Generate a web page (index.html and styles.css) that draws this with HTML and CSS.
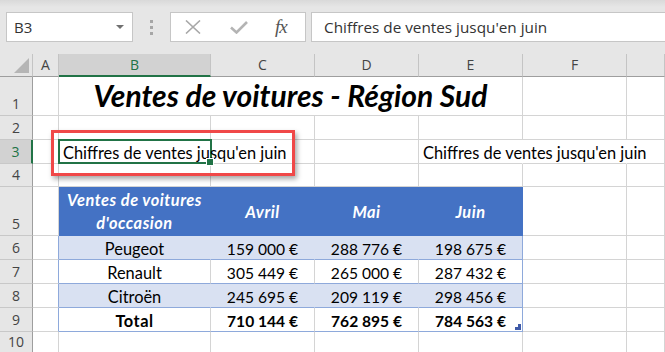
FILE: index.html
```html
<!DOCTYPE html>
<html lang="fr">
<head>
    <meta charset="UTF-8">
    <title>Ventes de voitures</title>
    <link rel="stylesheet" href="styles.css">
</head>
<body>
    <div class="toolbar">
        <div class="namebox">
            <span>B3</span>
            <span class="caret"></span>
        </div>
        <div class="grip"><i></i><i></i><i></i></div>
        <div class="fx-buttons">
            <svg width="16" height="14" viewBox="0 0 16 14"><path d="M1 0.5 L15 13.5 M15 0.5 L1 13.5" stroke="#a8a8a8" stroke-width="1.6" fill="none"/></svg>
            <svg width="18" height="13" viewBox="0 0 18 13"><path d="M1 6.5 L6.5 11.5 L17 1" stroke="#b4b4b4" stroke-width="2.6" fill="none"/></svg>
            <span class="fx">fx</span>
        </div>
        <div class="formula">Chiffres de ventes jusqu'en juin</div>
    </div>

    <div class="sheet">
        <table class="grid">
            <colgroup>
                <col class="c-head"><col class="c-a"><col class="c-b"><col class="c-n"><col class="c-n"><col class="c-n"><col class="c-n"><col class="c-g">
            </colgroup>
            <tr class="r-cols">
                <th class="corner"><span class="tri"></span></th>
                <th>A</th>
                <th class="sel">B</th>
                <th>C</th>
                <th>D</th>
                <th>E</th>
                <th>F</th>
                <th></th>
            </tr>
            <tr class="r-title">
                <th class="rh">1</th>
                <td></td>
                <td colspan="4" class="title">Ventes de voitures - Région Sud</td>
                <td></td>
                <td></td>
            </tr>
            <tr>
                <th class="rh">2</th>
                <td></td><td></td><td></td><td></td><td></td><td></td><td></td>
            </tr>
            <tr>
                <th class="rh sel">3</th>
                <td></td>
                <td class="active no-r"><span class="over">Chiffres de ventes jusqu'en juin</span></td>
                <td></td>
                <td></td>
                <td class="no-r"><span class="over">Chiffres de ventes jusqu'en juin</span></td>
                <td class="no-r"></td>
                <td></td>
            </tr>
            <tr class="r-4">
                <th class="rh">4</th>
                <td></td><td></td><td></td><td></td><td></td><td></td><td></td>
            </tr>
            <tr class="r-head">
                <th class="rh">5</th>
                <td></td>
                <td class="th-blue">Ventes de voitures<br>d'occasion</td>
                <td class="th-blue">Avril</td>
                <td class="th-blue">Mai</td>
                <td class="th-blue last">Juin</td>
                <td></td><td></td>
            </tr>
            <tr class="band">
                <th class="rh">6</th>
                <td class="edge"></td>
                <td class="t">Peugeot</td>
                <td class="t num">159 000 €</td>
                <td class="t num">288 776 €</td>
                <td class="t num last">198 675 €</td>
                <td></td><td></td>
            </tr>
            <tr>
                <th class="rh">7</th>
                <td class="edge"></td>
                <td class="t">Renault</td>
                <td class="t num">305 449 €</td>
                <td class="t num">265 000 €</td>
                <td class="t num last">287 432 €</td>
                <td></td><td></td>
            </tr>
            <tr class="band">
                <th class="rh">8</th>
                <td class="edge"></td>
                <td class="t">Citroën</td>
                <td class="t num">245 695 €</td>
                <td class="t num">209 119 €</td>
                <td class="t num last">298 456 €</td>
                <td></td><td></td>
            </tr>
            <tr class="total">
                <th class="rh">9</th>
                <td class="edge"></td>
                <td class="t label">Total</td>
                <td class="t num">710 144 €</td>
                <td class="t num">762 895 €</td>
                <td class="t num last"><span class="resize"></span>784 563 €</td>
                <td></td><td></td>
            </tr>
            <tr class="r-10">
                <th class="rh">10</th>
                <td></td><td></td><td></td><td></td><td></td><td></td><td></td>
            </tr>
        </table>
        <div class="callout"></div>
    </div>
</body>
</html>
```

FILE: styles.css
```css
:root {
    --ui-bg: #e6e6e6;
    --grid-line: #d4d4d4;
    --excel-green: #217346;
    --table-blue: #4472c4;
    --band: #d9e1f2;
    --band-line: #8ea9db;
}

* {
    margin: 0;
    padding: 0;
    box-sizing: border-box;
}

body {
    width: 665px;
    height: 352px;
    overflow: hidden;
    background: #fff;
    font-family: 'Open Sans', 'Noto Sans', sans-serif;
    color: #333;
}

/* Formula bar */
.toolbar {
    height: 54px;
    padding-top: 12px;
    display: flex;
    align-items: flex-start;
    background: linear-gradient(#d9d9d9, var(--ui-bg) 7px);
}

.namebox {
    margin-left: 6px;
    width: 127px;
    height: 30px;
    background: #fff;
    border: 1px solid #c6c6c6;
    display: flex;
    align-items: center;
    justify-content: space-between;
    padding: 0 8px 0 7px;
    font-size: 15px;
}

.caret {
    width: 0;
    height: 0;
    border-left: 4px solid transparent;
    border-right: 4px solid transparent;
    border-top: 4px solid #707070;
}

.grip {
    width: 37px;
    height: 30px;
    display: flex;
    flex-direction: column;
    align-items: center;
    justify-content: center;
    gap: 3px;
}

.grip i {
    width: 3px;
    height: 3px;
    background: #a6a6a6;
}

.fx-buttons {
    width: 136px;
    height: 30px;
    background: #fff;
    border: 1px solid #c6c6c6;
    display: flex;
    align-items: center;
    padding-left: 14px;
    gap: 29px;
}

.fx {
    font-family: 'Liberation Serif', serif;
    font-style: italic;
    font-size: 19px;
    color: #555;
    margin-left: -2px;
    letter-spacing: -1px;
}

.formula {
    margin-left: 5px;
    flex: 1;
    height: 30px;
    background: #fff;
    border: 1px solid #c6c6c6;
    border-right: none;
    padding-left: 12px;
    line-height: 28px;
    font-size: 15.3px;
    white-space: nowrap;
}

/* Worksheet */
.sheet {
    position: relative;
}

.grid {
    table-layout: fixed;
    border-collapse: separate;
    border-spacing: 0;
    width: 665px;
    font-family: 'Lato', sans-serif;
    font-size: 16.4px;
    color: #000;
}

.c-head { width: 33px; }
.c-a { width: 26px; }
.c-b { width: 152px; }
.c-n { width: 104px; }
.c-g { width: 38px; }

.grid td,
.grid th {
    height: 24px;
    border-right: 1px solid var(--grid-line);
    border-bottom: 1px solid var(--grid-line);
    vertical-align: bottom;
    line-height: 20px;
    padding: 0 4px;
    white-space: nowrap;
    overflow: visible;
}

.grid th {
    font-family: 'Open Sans', 'Noto Sans', sans-serif;
    font-weight: 400;
    font-size: 14px;
    color: #444;
    background: var(--ui-bg);
}

.r-cols th {
    height: 23px;
    vertical-align: middle;
    border-right-color: #c4c4c4;
    border-bottom-color: #9e9e9e;
}

.r-cols th.sel {
    background: #d2d2d2;
    color: var(--excel-green);
    border-bottom: 2px solid var(--excel-green);
}

.corner {
    position: relative;
}

.tri {
    position: absolute;
    right: 3px;
    bottom: 3px;
    width: 15px;
    height: 15px;
    background: #b5b5b5;
    clip-path: polygon(100% 0, 100% 100%, 0 100%);
}

.grid th.rh {
    text-align: center;
    padding: 0 0 1px;
    border-right-color: #9e9e9e;
    border-bottom-color: #c8c8c8;
}

.grid th.rh.sel {
    background: #d2d2d2;
    color: var(--excel-green);
    border-right: 2px solid var(--excel-green);
}

.r-title td { height: 39px; }
.r-4 td, .r-4 th { height: 23px; }
.r-head td, .r-head th { height: 49px; }
.r-10 td, .r-10 th { height: 22px; }

.grid td.title {
    font-size: 30px;
    font-weight: 700;
    font-style: italic;
    text-align: center;
    line-height: 30px;
    padding-bottom: 5px;
}

.no-r {
    border-right-color: transparent !important;
}

.over {
    position: relative;
    z-index: 1;
}

.active {
    position: relative;
}

.active::before {
    content: '';
    position: absolute;
    left: -1px;
    top: -1px;
    right: -2px;
    bottom: -1px;
    border: 2px solid var(--excel-green);
}

.active::after {
    content: '';
    position: absolute;
    right: -4px;
    bottom: -3px;
    width: 6px;
    height: 6px;
    background: var(--excel-green);
    border: 1px solid #fff;
    z-index: 2;
}

/* Used-car table */
.th-blue {
    background: var(--table-blue);
    color: #fff;
    font-weight: 700;
    font-style: italic;
    letter-spacing: 0.5px;
    text-align: center;
    vertical-align: middle !important;
    white-space: normal !important;
    line-height: 23px !important;
    border-right-color: var(--table-blue) !important;
    border-bottom-color: var(--table-blue) !important;
}

.grid td.t {
    text-align: center;
    border-bottom-color: var(--band-line);
}

.grid td.num {
    font-size: 15.6px;
}

.band td.t {
    background: var(--band);
    border-right-color: var(--band);
}

.grid td.edge {
    border-right-color: var(--band-line);
}

.grid td.last {
    border-right-color: var(--band-line);
}

.total td.t {
    font-weight: 700;
}

.total td.label {
    letter-spacing: 0.5px;
}

.total .last {
    position: relative;
}

.resize {
    position: absolute;
    right: 1px;
    bottom: 1px;
    width: 6px;
    height: 6px;
    background: #3f5aa8;
    clip-path: polygon(100% 0, 100% 100%, 0 100%, 0 50%, 50% 50%, 50% 0);
}

/* Red highlight around B3 */
.callout {
    position: absolute;
    left: 51px;
    top: 76px;
    width: 244px;
    height: 46px;
    border: 3px solid #f04848;
    box-shadow: 2px 3px 5px rgba(0, 0, 0, 0.35);
    pointer-events: none;
}
```
